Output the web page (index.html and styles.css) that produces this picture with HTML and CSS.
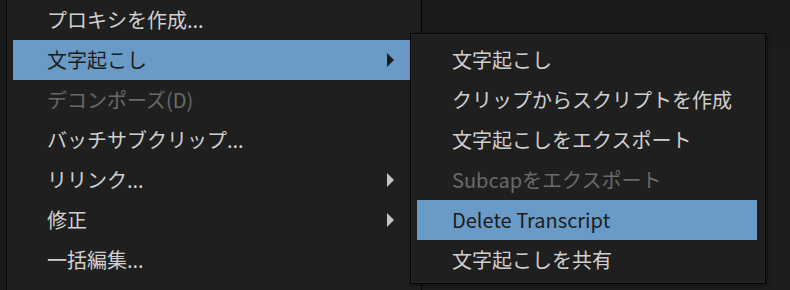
FILE: index.html
```html
<!DOCTYPE html>
<html lang="ja">
<head>
    <meta charset="UTF-8">
    <title>文字起こし メニュー</title>
    <link rel="stylesheet" href="styles.css">
</head>
<body>
    <div class="screen">
        <div class="side-strip"></div>

        <ul class="menu main-menu">
            <li class="item">プロキシを作成...</li>
            <li class="item active has-sub">文字起こし</li>
            <li class="item disabled">デコンポーズ(D)</li>
            <li class="item">バッチサブクリップ...</li>
            <li class="item has-sub">リリンク...</li>
            <li class="item has-sub">修正</li>
            <li class="item">一括編集...</li>
        </ul>

        <div class="backdrop">
            <div class="band"></div>
        </div>

        <!-- submenu popped out of 文字起こし -->
        <ul class="menu sub-menu">
            <li class="item">文字起こし</li>
            <li class="item">クリップからスクリプトを作成</li>
            <li class="item">文字起こしをエクスポート</li>
            <li class="item disabled">Subcapをエクスポート</li>
            <li class="item active">Delete Transcript</li>
            <li class="item">文字起こしを共有</li>
        </ul>
    </div>
</body>
</html>
```

FILE: styles.css
```css
html, body {
    margin: 0;
    padding: 0;
}
body {
    background-color: #1c1c1c;
    font-family: "Noto Sans CJK JP", "Noto Sans", sans-serif;
    font-size: 20px;
    color: #d0d0d0;
    width: 790px;
    height: 290px;
    overflow: hidden;
}
.screen {
    position: relative;
    display: flex;
    width: 790px;
    height: 290px;
}
.side-strip {
    width: 6px;
    background-color: #191919;
    border-right: 1px solid #050505;
}
.menu {
    list-style: none;
    margin: 0;
    background-color: #1f1f1f;
}
.item {
    height: 40px;
    line-height: 40px;
    white-space: nowrap;
    position: relative;
}
.item.disabled {
    color: #6a6a6a;
}
.item.active {
    background-color: #6a9bc6;
    color: #1c1c1c;
}
.main-menu {
    width: 408px;
    padding: 0 0 0 6px;
    border-right: 1px solid #050505;
}
.main-menu .item {
    padding-left: 34px;
}
.has-sub::after {
    content: "";
    position: absolute;
    left: 374px;
    top: 13px;
    border-style: solid;
    border-width: 7px 0 7px 7px;
    border-color: transparent transparent transparent #c4c4c4;
}
.has-sub.active::after {
    border-left-color: #1c1c1c;
}
.backdrop {
    flex: 1;
    background-color: #1d1d1d;
    display: flex;
    flex-direction: column;
}
.band {
    height: 48px;
    background-color: #1b1b1b;
}
.sub-menu {
    position: absolute;
    left: 410px;
    top: 33px;
    width: 340px;
    padding: 6px 8px 3px 6px;
    border: 1px solid #050505;
    box-shadow: inset 0 0 0 1px #262626, 2px 2px 4px rgba(0, 0, 0, 0.35);
}
.sub-menu .item {
    padding-left: 35px;
}
```
